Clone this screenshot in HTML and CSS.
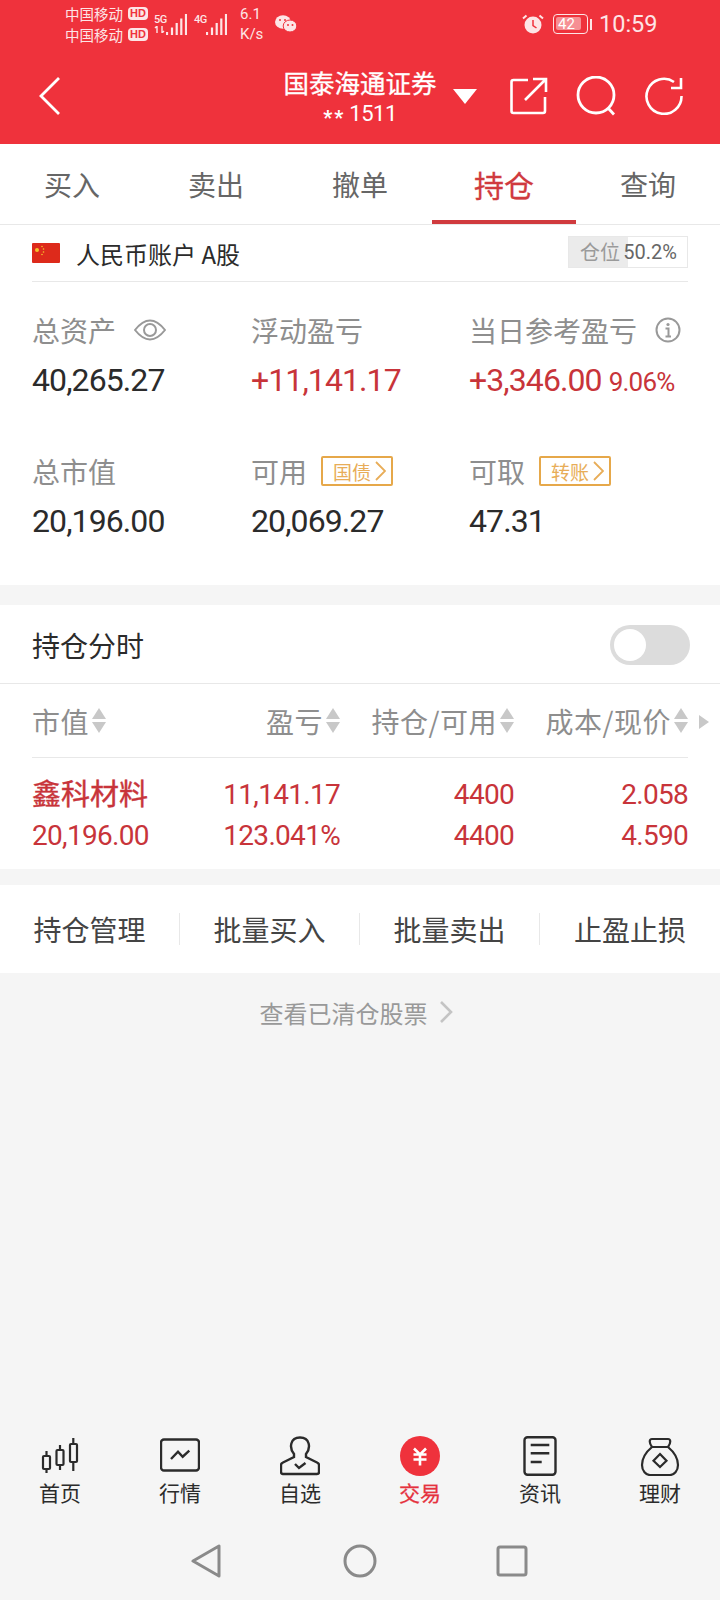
FILE: index.html
```html
<!DOCTYPE html>
<html lang="zh-CN">
<head>
  <meta charset="UTF-8">
  <meta name="viewport" content="width=device-width, initial-scale=1.0">
  <title>持仓</title>
  <link rel="stylesheet" href="styles.css">
</head>
<body>
  <div id="app">
    <header class="top">
      <div class="status">
        <div class="carriers">
          <div class="carrier">中国移动<span class="hd">HD</span></div>
          <div class="carrier">中国移动<span class="hd">HD</span></div>
        </div>
        <div class="signal signal-first">
          <div class="net"><span>5G</span><svg width="12" height="7" viewBox="0 0 12 7"><path d="M3 0V7M3 0L1 2M8 0V7M8 7L10 5" stroke="#fde5e6" stroke-width="1.400" fill="none"/></svg></div>
          <svg class="bars" width="21" height="21" viewBox="0 0 21 21"><path d="M1 18v3M6 13.500v7.500M10.700 9v12M15.300 4.500v16.500M20 0v21" stroke="#fde5e6" stroke-width="2.200" fill="none"/></svg>
        </div>
        <div class="signal signal-second">
          <div class="net"><span>4G</span></div>
          <svg class="bars" width="21" height="21" viewBox="0 0 21 21"><path d="M1 18v3M6 13.500v7.500M10.700 9v12M15.300 4.500v16.500M20 0v21" stroke="#fde5e6" stroke-width="2.200" fill="none"/></svg>
        </div>
        <div class="speed">6.1<br>K/s</div>
        <svg class="wechat" width="22" height="18" viewBox="0 0 22 18"><ellipse cx="8" cy="7" rx="8" ry="6.800" fill="#fde5e6"/><ellipse cx="15" cy="11" rx="6.800" ry="6" fill="#fde5e6" stroke="#ef323c"/><circle cx="5" cy="5" r="1" fill="#ef323c"/><circle cx="10" cy="5" r="1" fill="#ef323c"/><circle cx="13" cy="10" r="1" fill="#ef323c"/><circle cx="17.500" cy="10" r="1" fill="#ef323c"/></svg>
        <svg class="alarm" width="22" height="20" viewBox="0 0 22 20"><circle cx="11" cy="11" r="8.500" fill="#fde5e6"/><path d="M11 6v5.500l3.500 2.500" stroke="#ef323c" stroke-width="1.500" fill="none"/><path d="M1 4.500L4.500 1.500M21 4.500L17.500 1.500" stroke="#fde5e6" stroke-width="2" fill="none"/></svg>
        <div class="battery"><span class="level">42</span></div>
        <div class="battery-tip"></div>
        <div class="clock">10:59</div>
      </div>
      <div class="bar">
        <svg class="back" width="22" height="38" viewBox="0 0 22 38"><path d="M20 1L2 19L20 37" stroke="#fff" stroke-width="2.800" fill="none"/></svg>
        <div class="broker">
          <div class="broker-name">国泰海通证券</div>
          <div class="broker-id"><span class="stars">**</span>1511</div>
        </div>
        <div class="caret"></div>
        <svg class="share" width="38" height="38" viewBox="0 0 38 38"><path d="M18 3H3.500Q1.500 3 1.500 5V34Q1.500 36 3.500 36H33Q35 36 35 34V20M15 23L35 3M23 2H36V15" stroke="#fff" stroke-width="2.600" fill="none"/></svg>
        <svg class="search" width="42" height="40" viewBox="0 0 42 40"><circle cx="20" cy="19" r="18" stroke="#fff" stroke-width="2.800" fill="none"/><path d="M32 32L38 38.500" stroke="#fff" stroke-width="2.800" fill="none"/></svg>
        <svg class="refresh" width="38" height="38" viewBox="0 0 38 38"><path d="M36.500 19A17.500 17.500 0 1 1 29 5" stroke="#fff" stroke-width="2.600" fill="none"/><path d="M26 11H36V1" stroke="#fff" stroke-width="2.600" fill="none"/></svg>
      </div>
    </header>

    <nav class="tabs">
      <div class="tab">买入</div>
      <div class="tab">卖出</div>
      <div class="tab">撤单</div>
      <div class="tab active">持仓</div>
      <div class="tab">查询</div>
    </nav>

    <section class="card">
      <div class="account">
        <svg class="flag" width="28" height="20" viewBox="0 0 28 20"><rect width="28" height="20" rx="1" fill="#dd2a1b"/><circle cx="5" cy="7" r="2" fill="#f5c32c"/><circle cx="10" cy="3.500" r="0.800" fill="#f5c32c"/><circle cx="11.500" cy="6" r="0.800" fill="#f5c32c"/><circle cx="11.500" cy="9" r="0.800" fill="#f5c32c"/><circle cx="10" cy="11.500" r="0.800" fill="#f5c32c"/></svg>
        <span class="account-name">人民币账户 A股</span>
        <div class="position">
          <span class="position-label">仓位</span>
          <span class="position-value">50.2%</span>
        </div>
      </div>

      <div class="summary">
        <div class="cell">
          <div class="label">总资产
            <svg class="eye" width="32" height="22" viewBox="0 0 32 22"><path d="M1 11Q16 -8 31 11Q16 30 1 11Z" stroke="#999" stroke-width="2" fill="none"/><circle cx="16" cy="11" r="6" stroke="#999" stroke-width="2" fill="none"/></svg>
          </div>
          <div class="value num">40,265.27</div>
        </div>
        <div class="cell">
          <div class="label">浮动盈亏</div>
          <div class="value num up">+11,141.17</div>
        </div>
        <div class="cell">
          <div class="label">当日参考盈亏
            <svg class="info" width="26" height="26" viewBox="0 0 26 26"><circle cx="13" cy="13" r="11.500" stroke="#999" stroke-width="2" fill="none"/><circle cx="13" cy="7.500" r="1.600" fill="#999"/><path d="M10.500 11.500H13.500V19M10.500 19.500H16" stroke="#999" stroke-width="2" fill="none"/></svg>
          </div>
          <div class="value num up">+3,346.00<span class="rate">9.06%</span></div>
        </div>
        <div class="cell">
          <div class="label">总市值</div>
          <div class="value num">20,196.00</div>
        </div>
        <div class="cell">
          <div class="label">可用<span class="tag">国债<svg width="11" height="20" viewBox="0 0 11 20"><path d="M1 1L10 10L1 19" stroke="#e8ad58" stroke-width="1.800" fill="none"/></svg></span></div>
          <div class="value num">20,069.27</div>
        </div>
        <div class="cell">
          <div class="label">可取<span class="tag">转账<svg width="11" height="20" viewBox="0 0 11 20"><path d="M1 1L10 10L1 19" stroke="#e8ad58" stroke-width="1.800" fill="none"/></svg></span></div>
          <div class="value num">47.31</div>
        </div>
      </div>
    </section>

    <section class="card holdings">
      <div class="timeshare">
        <span>持仓分时</span>
        <div class="toggle"><div class="knob"></div></div>
      </div>
      <div class="table">
        <div class="thead">
          <div class="th first">市值<i class="sort"></i></div>
          <div class="th">盈亏<i class="sort"></i></div>
          <div class="th">持仓/可用<i class="sort"></i></div>
          <div class="th">成本/现价<i class="sort"></i></div>
        </div>
        <div class="more"></div>
        <div class="row num up">
          <div class="td first name">鑫科材料</div>
          <div class="td">11,141.17</div>
          <div class="td">4400</div>
          <div class="td">2.058</div>
          <div class="td first">20,196.00</div>
          <div class="td">123.041%</div>
          <div class="td">4400</div>
          <div class="td">4.590</div>
        </div>
      </div>
    </section>

    <section class="card actions">
      <div class="action">持仓管理</div>
      <div class="action">批量买入</div>
      <div class="action">批量卖出</div>
      <div class="action">止盈止损</div>
    </section>

    <div class="cleared">查看已清仓股票
      <svg width="14" height="22" viewBox="0 0 14 22"><path d="M2 1L12 11L2 21" stroke="#c4c4c4" stroke-width="2.600" fill="none"/></svg>
    </div>

    <nav class="dock">
      <div class="dock-item">
        <svg width="40" height="40" viewBox="0 0 40 40"><g stroke="#2b2b2b" stroke-width="2.200" fill="none"><path d="M6.500 15V20M6.500 33V37M20 9V14M20 29V34M33.300 2V8M33.300 26V35"/><rect x="3" y="20" width="7" height="13" rx="1"/><rect x="16.500" y="14" width="7" height="15" rx="1"/><rect x="30" y="8" width="7" height="18" rx="1"/></g></svg>
        <span>首页</span>
      </div>
      <div class="dock-item">
        <svg width="40" height="40" viewBox="0 0 40 40"><g stroke="#2b2b2b" stroke-width="2.400" fill="none"><rect x="1" y="3.500" width="38" height="31" rx="3"/><path d="M11 23L18 15.700L22.700 20.700L29.300 14.700"/></g></svg>
        <span>行情</span>
      </div>
      <div class="dock-item">
        <svg width="40" height="40" viewBox="0 0 40 40"><g stroke="#2b2b2b" stroke-width="2.400" fill="none"><path d="M14 18C9 12 10 1.500 20 1.500C30 1.500 31 12 26 18V21L37 26.500Q39 27.500 39 29V36Q39 38 37 38H3Q1 38 1 36V29Q1 27.500 3 26.500L14 21Z"/><path d="M15 28L19 32L25.500 27"/></g></svg>
        <span>自选</span>
      </div>
      <div class="dock-item active">
        <svg width="40" height="40" viewBox="0 0 40 40"><circle cx="20" cy="20" r="20" fill="#ef323c"/><path d="M14 12.500L20 18.500L26 12.500M13.500 18.500H26.500M13.500 23.500H26.500M20 18.500V29.500" stroke="#fff" stroke-width="2.600" fill="none"/></svg>
        <span>交易</span>
      </div>
      <div class="dock-item">
        <svg width="40" height="40" viewBox="0 0 40 40"><g stroke="#2b2b2b" stroke-width="2.400" fill="none"><rect x="4.500" y="1.200" width="31" height="37.600" rx="3"/><path d="M10.700 9H29.300M10.700 17.300H29.300M10.700 26H21.700"/></g></svg>
        <span>资讯</span>
      </div>
      <div class="dock-item">
        <svg width="40" height="40" viewBox="0 0 40 40"><g stroke="#2b2b2b" stroke-width="2.200" fill="none"><path d="M12 11C9 7 9 3 12 3H28C31 3 31 7 28 11Z"/><path d="M12 11C6 16 2 22 2 29C2 35 6 39 10 39H30C34 39 38 35 38 29C38 22 34 16 28 11"/><path d="M20 18L26.500 24.700L20 31L13.500 24.700Z"/></g></svg>
        <span>理财</span>
      </div>
    </nav>

    <div class="keys">
      <svg class="key-back" width="30" height="34" viewBox="0 0 30 34"><path d="M2 17L28 2V32Z" stroke="#8a8a8a" stroke-width="3" stroke-linejoin="round" fill="none"/></svg>
      <svg class="key-home" width="34" height="34" viewBox="0 0 34 34"><circle cx="17" cy="17" r="15" stroke="#8a8a8a" stroke-width="3" fill="none"/></svg>
      <svg class="key-recent" width="32" height="32" viewBox="0 0 32 32"><rect x="2" y="2" width="28" height="28" rx="2" stroke="#8a8a8a" stroke-width="3" fill="none"/></svg>
    </div>
  </div>
</body>
</html>
```

FILE: styles.css
```css
body {
  margin: 0;
  background-color: #f5f5f5;
  font-family: "Noto Sans CJK SC", "Noto Sans", sans-serif;
  color: #2b2b2b;
}

svg {
  display: block;
  flex: none;
}

#app {
  display: flex;
  flex-direction: column;
  height: 1600px;
  overflow: hidden;
}

.num {
  font-family: "Roboto", "Noto Sans CJK SC", sans-serif;
}

.up {
  color: #c8343a;
}

/* header */
.top {
  height: 144px;
  background-color: #ef323c;
  color: #fff;
}

.status {
  display: flex;
  align-items: center;
  height: 48px;
  padding-left: 65px;
  color: #fde5e6;
}

.carriers {
  width: 83px;
}

.carrier {
  display: flex;
  align-items: center;
  height: 21px;
  font-size: 14.500px;
  line-height: 21px;
  white-space: nowrap;
}

.hd {
  margin-left: 5px;
  padding: 0 2px;
  border-radius: 4px;
  background-color: #fde5e6;
  color: #ef323c;
  font: bold 11px/13px "Liberation Sans", sans-serif;
}

.signal {
  display: flex;
  align-items: flex-end;
  height: 21px;
  margin-top: 1px;
}

.signal-first {
  margin-left: 6px;
}

.signal-second {
  margin-left: 7px;
}

.net {
  display: flex;
  flex-direction: column;
  width: 12px;
  height: 21px;
  font: 500 11px/12px "Roboto", sans-serif;
  letter-spacing: -0.500px;
}

.speed {
  width: 26px;
  margin-left: 13px;
  font: 15px/20px "Roboto", sans-serif;
}

.wechat {
  margin-left: 9px;
}

.alarm {
  margin-left: 225px;
}

.battery {
  width: 35px;
  height: 20px;
  margin-left: 9px;
  padding: 2px;
  box-sizing: border-box;
  border: 1.500px solid #fde5e6;
  border-radius: 4px;
}

.level {
  display: block;
  width: 23px;
  height: 13px;
  padding-left: 2px;
  border-radius: 2px;
  background-color: #f68f94;
  font: 15px/14px "Roboto", sans-serif;
  color: #fff;
}

.battery-tip {
  width: 2px;
  height: 11px;
  margin-left: 2px;
  background-color: #fde5e6;
}

.clock {
  margin-left: 7px;
  font: 23.500px/28px "Roboto", sans-serif;
}

.bar {
  display: flex;
  align-items: center;
  height: 96px;
  padding-left: 39px;
}

.broker {
  width: 156px;
  margin-left: 221px;
  text-align: center;
}

.broker-name {
  font-size: 25.500px;
  line-height: 36px;
  -webkit-text-stroke: 0.300px #fff;
  white-space: nowrap;
}

.broker-id {
  display: flex;
  justify-content: center;
  align-items: center;
  height: 28px;
  font: 22px/28px "Roboto", sans-serif;
  letter-spacing: -0.500px;
}

.stars {
  margin: 8px 4px 0 0;
  font-size: 20px;
  font-weight: 700;
  letter-spacing: 2px;
}

.caret {
  width: 0;
  height: 0;
  margin: 0 0 0 15px;
  border-left: 12px solid transparent;
  border-right: 12px solid transparent;
  border-top: 15px solid #fff;
}

.share {
  margin-left: 33px;
}

.search {
  margin-left: 28px;
}

.refresh {
  margin-left: 27px;
}

/* tabs */
.tabs {
  display: grid;
  grid-template-columns: repeat(5, 144px);
  height: 80px;
  background-color: #fff;
  border-bottom: 1px solid #e8e8e8;
}

.tab {
  height: 80px;
  box-sizing: border-box;
  text-align: center;
  font-size: 28px;
  line-height: 81px;
  color: #666;
}

.tab.active {
  border-bottom: 4px solid #d03a3e;
  color: #d03a3e;
  font-size: 30px;
  -webkit-text-stroke: 0.300px #d03a3e;
}

/* account card */
.card {
  background-color: #fff;
}

.account {
  display: flex;
  align-items: center;
  height: 56px;
  margin: 0 32px;
  border-bottom: 1px solid #e8e8e8;
}

.account-name {
  margin-left: 16px;
  font-size: 24px;
}

.position {
  display: flex;
  justify-content: space-between;
  align-items: center;
  width: 120px;
  height: 32px;
  margin: -3px 0 0 auto;
  box-sizing: border-box;
  border: 1px solid #e8e8e8;
  background: linear-gradient(to right, #ebebeb 59px, #fff 59px);
  padding: 0 10px 0 11px;
}

.position-label {
  font-size: 20px;
  color: #9a9a9a;
}

.position-value {
  font: 20px "Roboto", sans-serif;
  color: #666;
}

.summary {
  display: grid;
  grid-template-columns: 219px 218px 1fr;
  row-gap: 43px;
  padding: 24px 0 40px 32px;
}

.label {
  display: flex;
  align-items: center;
  height: 48px;
  font-size: 28px;
  color: #8e8e8e;
}

.eye {
  margin-left: 18px;
}

.info {
  margin-left: 18px;
  margin-top: -1px;
}

.tag {
  display: flex;
  align-items: center;
  gap: 4px;
  width: 72px;
  height: 30px;
  margin: 0 0 0 14px;
  padding-left: 10px;
  box-sizing: border-box;
  border: 2px solid #e6a84a;
  border-radius: 2px;
  font-size: 19px;
  color: #e8ad58;
}

.value {
  height: 50px;
  font-size: 32px;
  line-height: 52px;
  letter-spacing: -0.900px;
  white-space: nowrap;
}

.rate {
  margin-left: 7px;
  font-size: 26px;
  letter-spacing: -0.800px;
}

/* holdings */
.holdings {
  margin-top: 20px;
}

.timeshare {
  display: flex;
  justify-content: space-between;
  align-items: center;
  height: 77px;
  padding: 1px 30px 0 32px;
  border-bottom: 1px solid #e8e8e8;
  font-size: 28px;
}

.toggle {
  width: 80px;
  height: 40px;
  padding: 4px;
  box-sizing: border-box;
  border-radius: 20px;
  background-color: #dcdcdc;
}

.knob {
  width: 32px;
  height: 32px;
  border-radius: 50%;
  background-color: #fff;
}

.table {
  position: relative;
  padding: 0 32px;
}

.thead,
.row {
  display: grid;
  grid-template-columns: 168px 140px 174px 174px;
}

.thead {
  height: 73px;
  border-bottom: 1px solid #e8e8e8;
  align-items: center;
  font-size: 28px;
  letter-spacing: 0.500px;
  color: #8e8e8e;
}

.th {
  display: flex;
  justify-content: flex-end;
  align-items: center;
  white-space: nowrap;
}

.th.first {
  justify-content: flex-start;
}

.sort {
  display: flex;
  flex-direction: column;
  justify-content: space-between;
  height: 25px;
  margin-left: 3px;
}

.sort::before,
.sort::after {
  content: "";
  border-left: 7px solid transparent;
  border-right: 7px solid transparent;
}

.sort::before {
  border-bottom: 11px solid #c8c8c8;
}

.sort::after {
  border-top: 11px solid #c8c8c8;
}

.more {
  position: absolute;
  top: 31px;
  right: 11px;
  width: 0;
  height: 0;
  border-top: 7px solid transparent;
  border-bottom: 7px solid transparent;
  border-left: 10px solid #c8c8c8;
}

.row {
  padding: 16px 0 13px;
  font-size: 28px;
  line-height: 41px;
  letter-spacing: -0.700px;
}

.td {
  text-align: right;
  white-space: nowrap;
}

.td.first {
  text-align: left;
}

.name {
  margin-top: -2px;
  font-family: "Noto Sans CJK SC", sans-serif;
  font-size: 29px;
  letter-spacing: 0;
  -webkit-text-stroke: 0.400px #c8343a;
}

/* action row */
.actions {
  display: grid;
  grid-template-columns: repeat(4, 180px);
  align-items: center;
  height: 88px;
  margin-top: 16px;
}

.action {
  height: 32px;
  border-right: 1px solid #e8e8e8;
  text-align: center;
  font-size: 28px;
  line-height: 32px;
  color: #444;
}

.action:last-child {
  border-right: none;
}

.cleared {
  display: flex;
  justify-content: center;
  align-items: center;
  gap: 11px;
  height: 78px;
  padding-right: 8px;
  font-size: 24px;
  color: #999;
}

/* bottom nav */
.dock {
  display: grid;
  grid-template-columns: repeat(6, 120px);
  margin-top: auto;
  height: 88px;
}

.dock-item {
  display: flex;
  flex-direction: column;
  align-items: center;
  font-size: 21px;
  line-height: 33px;
  color: #2b2b2b;
}

.dock-item.active {
  color: #e5323e;
  -webkit-text-stroke: 0.300px #e5323e;
}

.keys {
  display: flex;
  align-items: center;
  height: 74px;
  padding: 0 0 2px 191px;
}

.key-home {
  margin-left: 122px;
}

.key-recent {
  margin-left: 119px;
}
```
